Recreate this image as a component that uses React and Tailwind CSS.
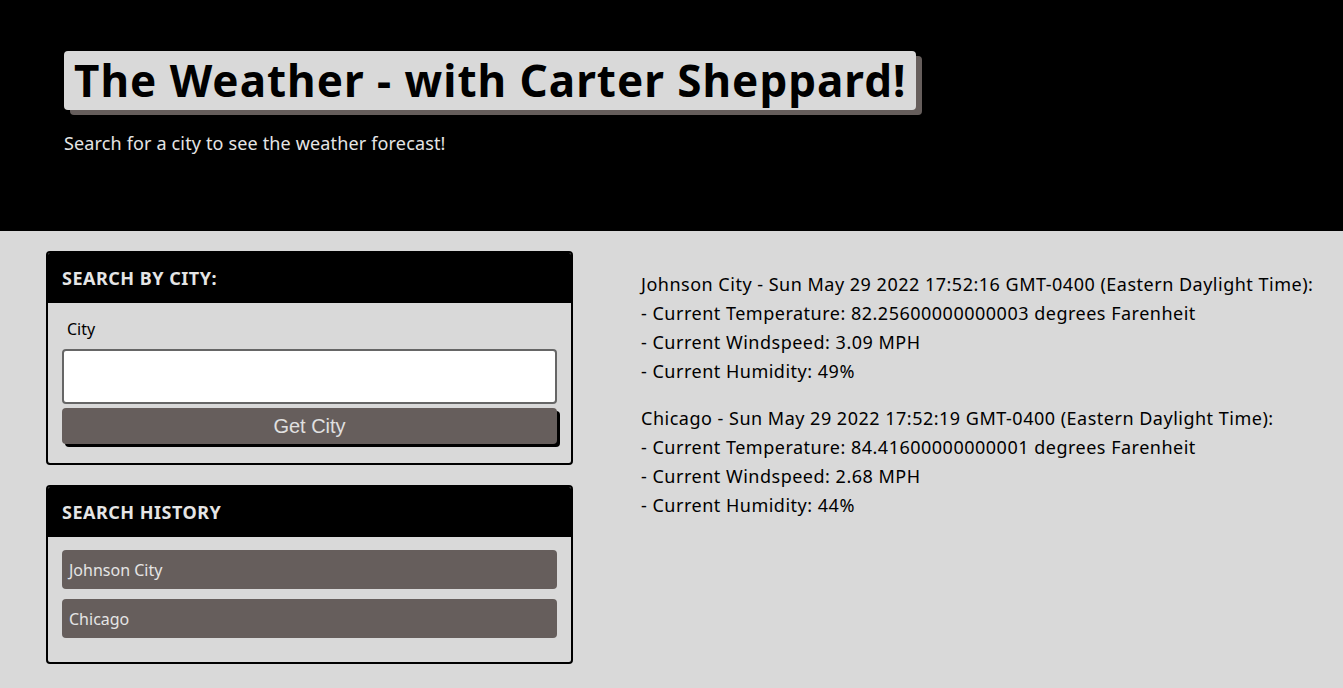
const forecasts = [
    {
        title: 'Johnson City - Sun May 29 2022 17:52:16 GMT-0400 (Eastern Daylight Time):',
        temp: '82.25600000000003',
        wind: '3.09',
        humidity: '49',
    },
    {
        title: 'Chicago - Sun May 29 2022 17:52:19 GMT-0400 (Eastern Daylight Time):',
        temp: '84.41600000000001',
        wind: '2.68',
        humidity: '44',
    },
];

const history = ['Johnson City', 'Chicago'];

function Card({ title, children }) {
    return (
        <div className="overflow-hidden rounded-[4px] border-2 border-black bg-[#d9d9d9]">
            <div className="flex h-[50px] items-center bg-black px-[14px] text-[18px] font-bold uppercase tracking-[0.5px] text-[#e5e5e5]">
                {title}
            </div>
            {children}
        </div>
    );
}

export default function App() {
    return (
        <div className="min-h-screen bg-[#d9d9d9] font-['Noto_Sans',sans-serif]">
            {/* header */}
            <header className="h-[231px] bg-black px-16 pt-[51px]">
                <h1 className="inline-block rounded-[4px] bg-[#d9d9d9] px-[10px] text-[44px] font-bold leading-[59px] tracking-[1px] text-black shadow-[6px_5px_0_#665e5c]">
                    The Weather - with Carter Sheppard!
                </h1>
                <p className="mt-[20px] text-[18px] tracking-[0.15px] text-[#e5e5e5]">
                    Search for a city to see the weather forecast!
                </p>
            </header>

            <main className="flex gap-[68px] px-[46px] pt-5">
                <div className="flex w-[527px] shrink-0 flex-col gap-5">
                    <Card title="Search by city:">
                        <div className="px-[14px] pb-[19px] pt-[14px]">
                            <label className="block pl-[5px] text-[16px] text-black">City</label>
                            <input className="mt-[8px] block h-[55px] w-full rounded-[4px] border-2 border-[#666] bg-white" />
                            <button className="mt-[4px] block h-[36px] w-full rounded-[4px] bg-[#665e5c] font-['Liberation_Sans',sans-serif] text-[20px] text-[#e0e0e0] shadow-[3px_3px_0_#000]">
                                Get City
                            </button>
                        </div>
                    </Card>

                    <Card title="Search history">
                        <div className="flex flex-col gap-[10px] px-[14px] pb-[24px] pt-[13px]">
                            {history.map((city) => (
                                <button
                                    key={city}
                                    className="h-[39px] rounded-[4px] bg-[#665e5c] px-[7px] text-left text-[16px] text-[#e5e5e5]"
                                >
                                    {city}
                                </button>
                            ))}
                        </div>
                    </Card>
                </div>

                <div className="shrink-0 whitespace-nowrap pt-[19px] text-[18px] leading-[29px] tracking-[0.5px] text-black">
                    {forecasts.map((f) => (
                        <div key={f.title} className="mb-[18px]">
                            <p>{f.title}</p>
                            <p>- Current Temperature: {f.temp} degrees Farenheit</p>
                            <p>- Current Windspeed: {f.wind} MPH</p>
                            <p>- Current Humidity: {f.humidity}%</p>
                        </div>
                    ))}
                </div>
            </main>
        </div>
    );
}
